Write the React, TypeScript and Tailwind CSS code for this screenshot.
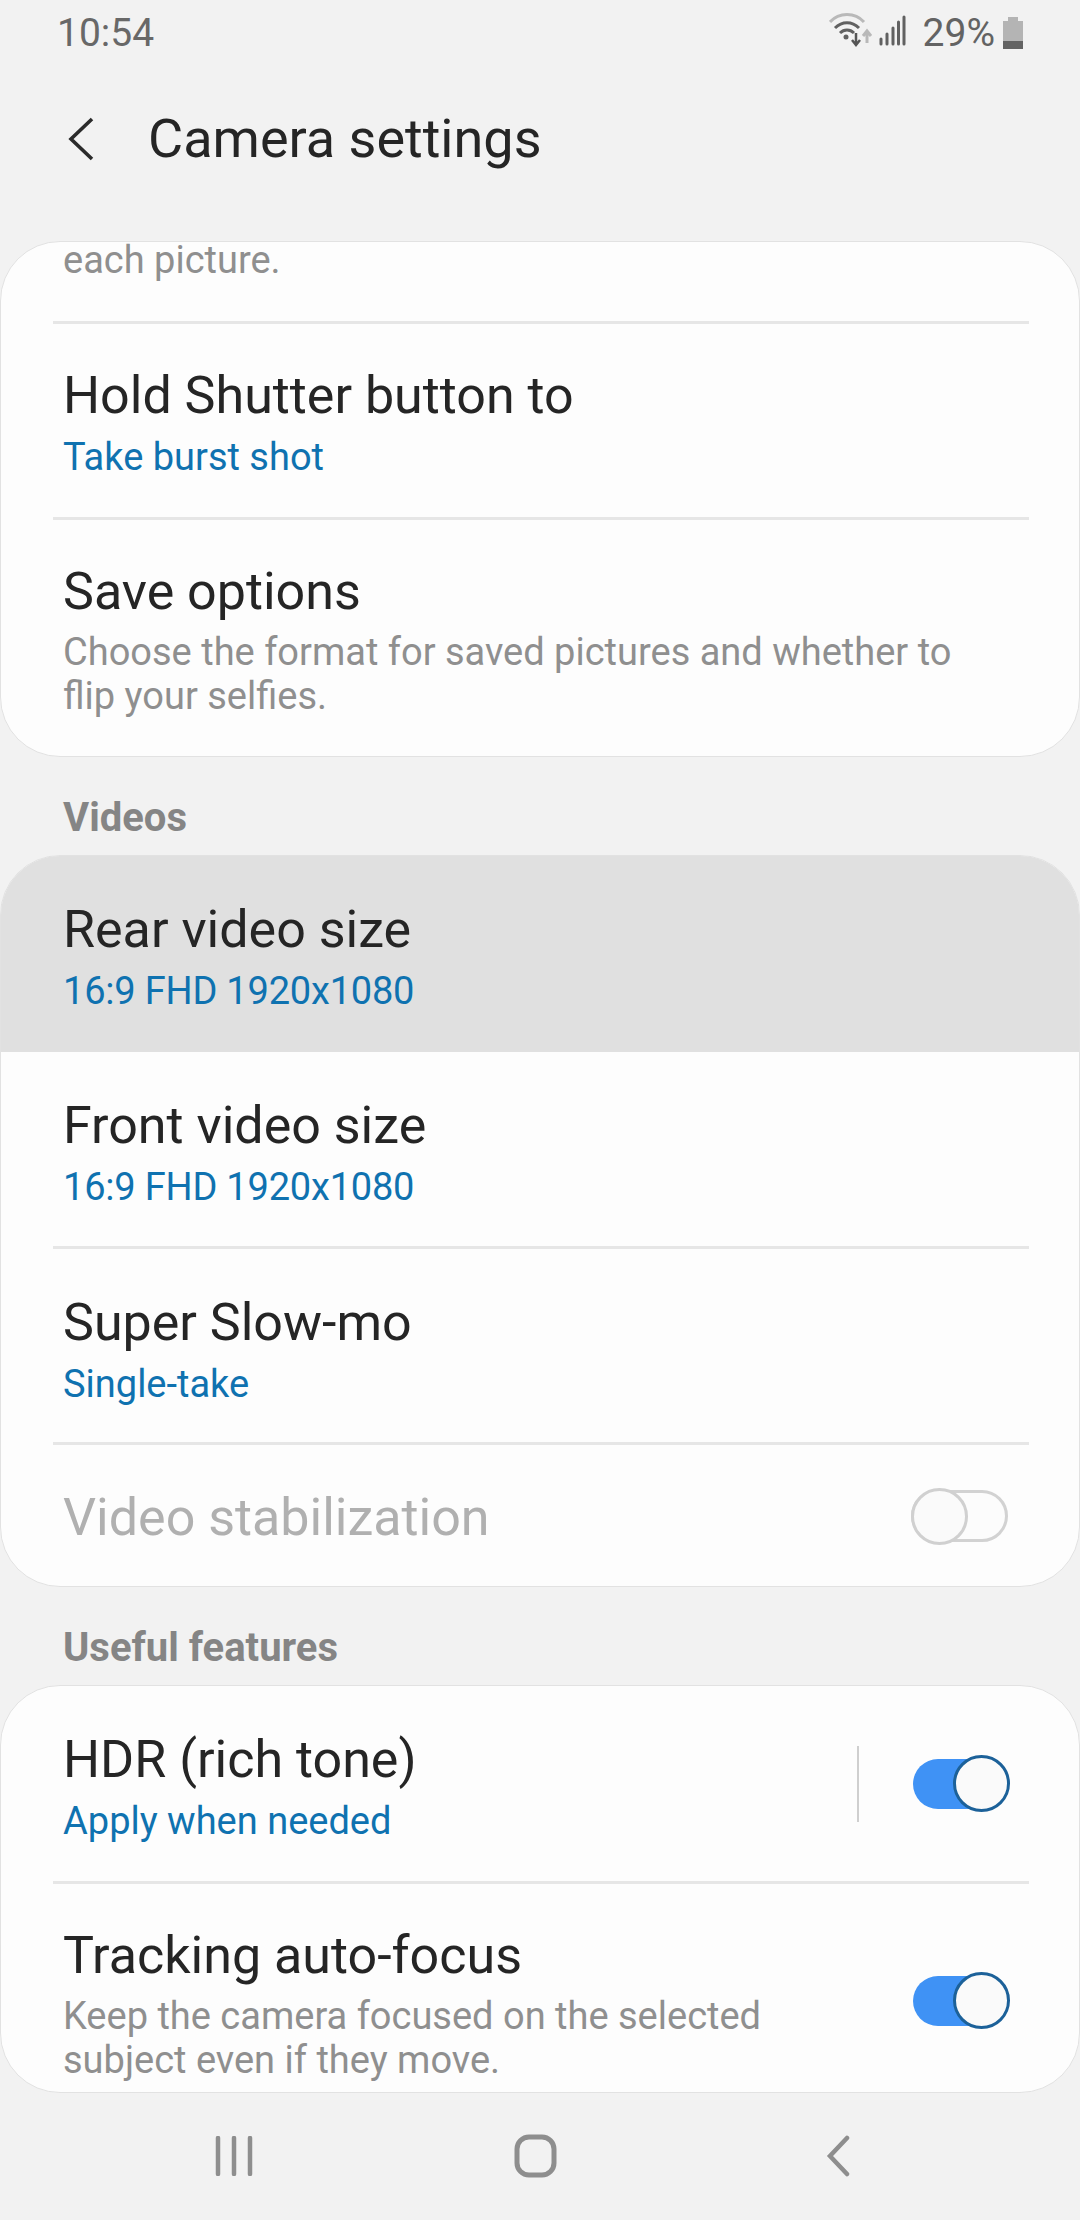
const font = "font-['Roboto',sans-serif]";

const Divider = () => <div className="ml-[52px] mr-[50px] h-[3px] bg-[#e6e6e6]" />;

const Toggle = ({ disabled }: { disabled?: boolean }) => {
  if (disabled) {
    return (
      <div className="relative h-[52px] w-[97px] rounded-full border-[3px] border-[#d2d2d2] bg-[#fcfcfc]">
        <div className="absolute left-[-3px] top-[-5px] h-[57px] w-[57px] rounded-full border-[3px] border-[#d0d0d0] bg-[#fafafa]" />
      </div>
    );
  }
  return (
    <div className="relative h-[50px] w-[95px] rounded-full bg-[#3f92f5]">
      <div className="absolute right-[-2px] top-[-4px] h-[57px] w-[57px] rounded-full border-[3px] border-[#1c6199] bg-[#fafafa]" />
    </div>
  );
};

type RowProps = {
  title: string;
  value?: string;
  lines?: string[];
  low?: boolean;
  tight?: boolean;
};

const Row = ({ title, value, lines, low, tight }: RowProps) => (
  <div className={`pl-[62px] ${low ? "pt-[44px]" : "pt-[42px]"}`}>
    <div className="text-[52px] leading-[60px] text-[#252525]">{title}</div>
    {value && (
      <div className={`mt-[2px] text-[38px] leading-[58px] text-[#0f72b0] ${tight ? "tracking-[-0.2px]" : ""}`}>
        {value}
      </div>
    )}
    {lines && (
      <div className="mt-[8px] text-[38px] leading-[44px] text-[#8f8f8f]">
        {lines.map((l) => (
          <div key={l}>{l}</div>
        ))}
      </div>
    )}
  </div>
);

const SectionLabel = ({ text }: { text: string }) => (
  <div className="flex h-[98px] items-end pb-[14px] pl-[63px] text-[40px] font-bold leading-[46px] text-[#858585]">
    {text}
  </div>
);

const StatusIcons = () => (
  <div className="flex items-center">
    <svg width="79" height="40" viewBox="0 0 79 40" fill="none">
      <path d="M1 9C10 -1 26 -1 35 9" stroke="#b9b9b9" strokeWidth="3" />
      <path d="M6 15C13 8 23 8 30 15" stroke="#616161" strokeWidth="3" />
      <path d="M11 20C15 16 21 16 25 20" stroke="#616161" strokeWidth="3" />
      <circle cx="17" cy="24" r="2.5" fill="#616161" />
      <path d="M27 20V32M23 27L27 32L31 27" stroke="#555555" strokeWidth="2.5" />
      <path d="M38 30V18M34 23L38 18L42 23" stroke="#b9b9b9" strokeWidth="3" />
      <path d="M52 31V26M58 31V21M64 31V15M69.500 31V9M75 31V4" stroke="#616161" strokeWidth="3" strokeLinecap="round" />
    </svg>
    <span className="ml-[15px] text-[39px] leading-[44px] text-[#636363]">29%</span>
    <svg width="22" height="33" viewBox="0 0 22 33" className="ml-[7px]">
      <path d="M6 0H16V4H21V24H1V4H6Z" fill="#b4b4b4" />
      <path d="M1 24H21V32H1Z" fill="#636363" />
    </svg>
  </div>
);

export default function App() {
  return (
    <div className={`flex h-[2220px] w-[1080px] flex-col overflow-hidden bg-[#f2f2f2] ${font}`}>
      <div className="flex h-[64px] items-center justify-between pl-[57px] pr-[56px] pt-[2px]">
        <span className="text-[39px] leading-[44px] text-[#686868]">10:54</span>
        <StatusIcons />
      </div>

      <div className="flex h-[150px] items-center pl-[68px]">
        <svg width="26" height="44" viewBox="0 0 26 44" fill="none">
          <path d="M24 2L3 22L24 42" stroke="#2b2b2b" strokeWidth="3.6" />
        </svg>
        <span className="ml-[54px] text-[54px] leading-[60px] text-[#252525]">Camera settings</span>
      </div>

      <div className="h-[27px]" />

      <div className="h-[516px] overflow-hidden rounded-[60px] border border-[#e2e2e2] bg-[#fdfdfd]">
        <div className="h-[79px] overflow-hidden pl-[62px] text-[38px] leading-[36px] text-[#8f8f8f]">
          each picture.
        </div>
        <Divider />
        <div className="h-[193px]">
          <Row title="Hold Shutter button to" value="Take burst shot" />
        </div>
        <Divider />
        <Row
          title="Save options"
          lines={["Choose the format for saved pictures and whether to", "flip your selfies."]}
        />
      </div>

      <SectionLabel text="Videos" />

      <div className="h-[732px] overflow-hidden rounded-[60px] border border-[#e2e2e2] bg-[#fdfdfd]">
        <div className="h-[196px] bg-[#e0e0e0]">
          <Row title="Rear video size" value="16:9 FHD 1920x1080" low tight />
        </div>
        <div className="h-[194px]">
          <Row title="Front video size" value="16:9 FHD 1920x1080" low tight />
        </div>
        <Divider />
        <div className="h-[193px]">
          <Row title="Super Slow-mo" value="Single-take" low />
        </div>
        <Divider />
        <div className="flex h-[141px] items-center justify-between pl-[62px] pr-[71px]">
          <span className="pt-[4px] text-[52px] leading-[60px] text-[#b0b0b0]">Video stabilization</span>
          <Toggle disabled />
        </div>
      </div>

      <SectionLabel text="Useful features" />

      <div className="h-[408px] overflow-hidden rounded-[60px] border border-[#e2e2e2] bg-[#fdfdfd]">
        <div className="flex h-[195px] items-start justify-between">
          <Row title="HDR (rich tone)" value="Apply when needed" low />
          <div className="mt-[60px] flex items-center">
            <div className="h-[76px] w-[2px] bg-[#cfcfcf]" />
            <div className="ml-[54px] mr-[71px]">
              <Toggle />
            </div>
          </div>
        </div>
        <Divider />
        <div className="flex justify-between">
          <Row
            title="Tracking auto-focus"
            lines={["Keep the camera focused on the selected", "subject even if they move."]}
          />
          <div className="mr-[71px] mt-[92px]">
            <Toggle />
          </div>
        </div>
      </div>

      <div className="flex flex-1 items-center justify-center pb-[2px] pr-[15px]">
        <div className="flex w-[635px] items-center justify-between">
          <svg width="38" height="40" viewBox="0 0 38 40" fill="none">
            <path d="M3 2V38M19 2V38M35 2V38" stroke="#8e8e8e" strokeWidth="4.5" strokeLinecap="round" />
          </svg>
          <svg width="43" height="44" viewBox="0 0 43 44" fill="none" className="mr-[8px]">
            <rect x="3" y="3" width="37" height="38" rx="12" stroke="#8e8e8e" strokeWidth="5" />
          </svg>
          <svg width="24" height="42" viewBox="0 0 24 42" fill="none">
            <path d="M21 3L4 21L21 39" stroke="#8e8e8e" strokeWidth="4.5" strokeLinecap="round" />
          </svg>
        </div>
      </div>
    </div>
  );
}
